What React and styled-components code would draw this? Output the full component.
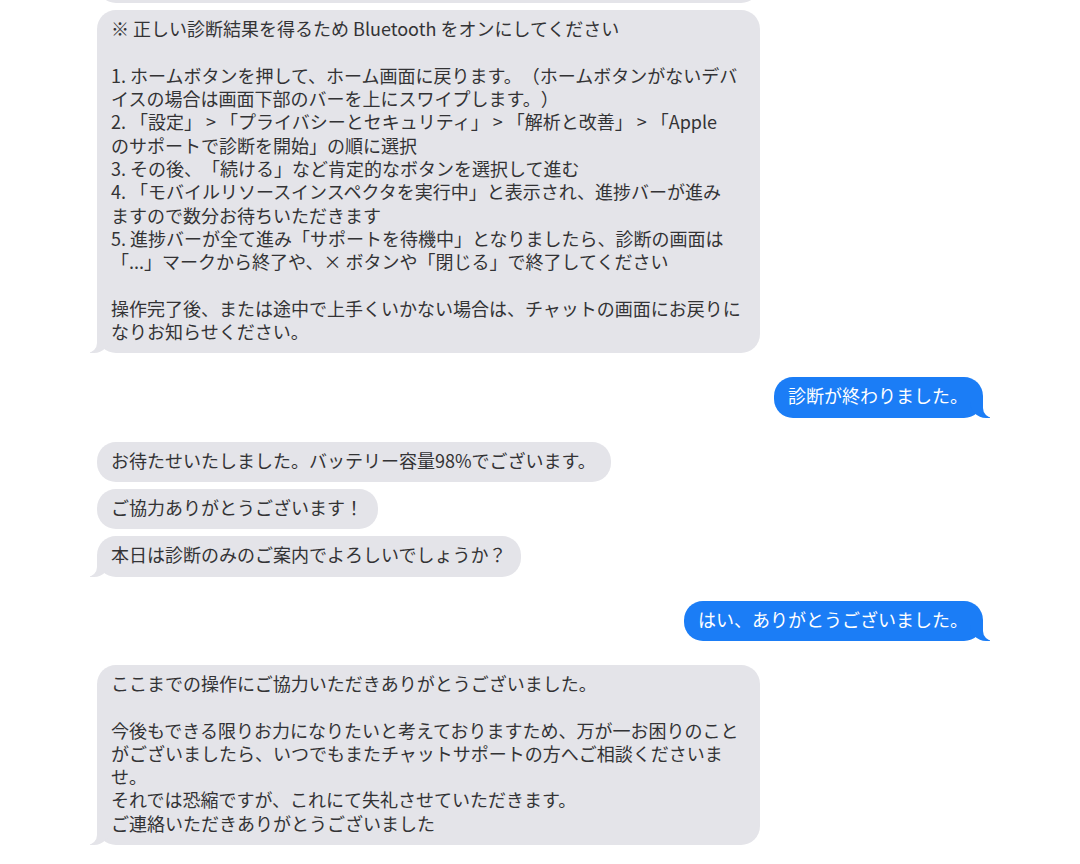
import styled, { createGlobalStyle, css } from "styled-components";

const GlobalStyle = createGlobalStyle`
  html, body {
    margin: 0;
    padding: 0;
    background: #ffffff;
    overflow: hidden;
  }
  body {
    font-family: "Noto Sans CJK JP", "Noto Sans", sans-serif;
  }
`;

const GRAY = "#e4e4e9";
const BLUE = "#1b7df6";

const Thread = styled.div`
  display: flex;
  flex-direction: column;
  gap: 24px;
  margin-top: -37px;
  padding: 0 97px 0 97px;
`;

const Group = styled.div`
  display: flex;
  flex-direction: column;
  gap: 7px;
  align-items: ${(p) => (p.$mine ? "flex-end" : "flex-start")};
`;

const tailLeft = css`
  &::before {
    content: "";
    position: absolute;
    bottom: 0;
    left: -7px;
    width: 20px;
    height: 20px;
    background: ${GRAY};
    border-bottom-right-radius: 16px;
  }
  &::after {
    content: "";
    position: absolute;
    bottom: 0;
    left: -10px;
    width: 10px;
    height: 20px;
    background: #ffffff;
    border-bottom-right-radius: 10px;
  }
`;

const tailRight = css`
  &::before {
    content: "";
    position: absolute;
    bottom: 0;
    right: -7px;
    width: 20px;
    height: 20px;
    background: ${BLUE};
    border-bottom-left-radius: 16px;
  }
  &::after {
    content: "";
    position: absolute;
    bottom: 0;
    right: -10px;
    width: 10px;
    height: 20px;
    background: #ffffff;
    border-bottom-left-radius: 10px;
  }
`;

const Bubble = styled.div`
  position: relative;
  box-sizing: border-box;
  width: ${(p) => (p.$wide ? "663px" : "auto")};
  padding: 7px 15px 10px 14px;
  border-radius: 19px;
  font-size: 18px;
  line-height: 23.3px;
  white-space: pre;
  text-spacing-trim: space-all;
  background: ${(p) => (p.$mine ? BLUE : GRAY)};
  color: ${(p) => (p.$mine ? "#ffffff" : "#333335")};
  ${(p) => p.$tail && (p.$mine ? tailRight : tailLeft)}
`;

const guide = [
  "※ 正しい診断結果を得るため Bluetooth をオンにしてください",
  "",
  "1. ホームボタンを押して、ホーム画面に戻ります。（ホームボタンがないデバ",
  "イスの場合は画面下部のバーを上にスワイプします。）",
  "2. 「設定」 > 「プライバシーとセキュリティ」 > 「解析と改善」 > 「Apple",
  "のサポートで診断を開始」の順に選択",
  "3. その後、「続ける」など肯定的なボタンを選択して進む",
  "4. 「モバイルリソースインスペクタを実行中」と表示され、進捗バーが進み",
  "ますので数分お待ちいただきます",
  "5. 進捗バーが全て進み「サポートを待機中」となりましたら、診断の画面は",
  "「...」マークから終了や、× ボタンや「閉じる」で終了してください",
  "",
  "操作完了後、または途中で上手くいかない場合は、チャットの画面にお戻りに",
  "なりお知らせください。",
].join("\n");

const closing = [
  "ここまでの操作にご協力いただきありがとうございました。",
  "",
  "今後もできる限りお力になりたいと考えておりますため、万が一お困りのこと",
  "がございましたら、いつでもまたチャットサポートの方へご相談くださいま",
  "せ。",
  "それでは恐縮ですが、これにて失礼させていただきます。",
  "ご連絡いただきありがとうございました",
].join("\n");

const messages = [
  {
    mine: false,
    items: [{ text: "\u00a0", wide: true }, { text: guide, wide: true }],
  },
  { mine: true, items: [{ text: "診断が終わりました。" }] },
  {
    mine: false,
    items: [
      { text: "お待たせいたしました。バッテリー容量98%でございます。" },
      { text: "ご協力ありがとうございます！" },
      { text: "本日は診断のみのご案内でよろしいでしょうか？" },
    ],
  },
  { mine: true, items: [{ text: "はい、ありがとうございました。" }] },
  { mine: false, items: [{ text: closing, wide: true }] },
];

export default function App() {
  return (
    <>
      <GlobalStyle />
      <Thread>
        {messages.map((group, gi) => (
          <Group key={gi} $mine={group.mine}>
            {group.items.map((m, i) => (
              <Bubble
                key={i}
                $mine={group.mine}
                $wide={m.wide}
                $tail={i === group.items.length - 1}
              >
                {m.text}
              </Bubble>
            ))}
          </Group>
        ))}
      </Thread>
    </>
  );
}
